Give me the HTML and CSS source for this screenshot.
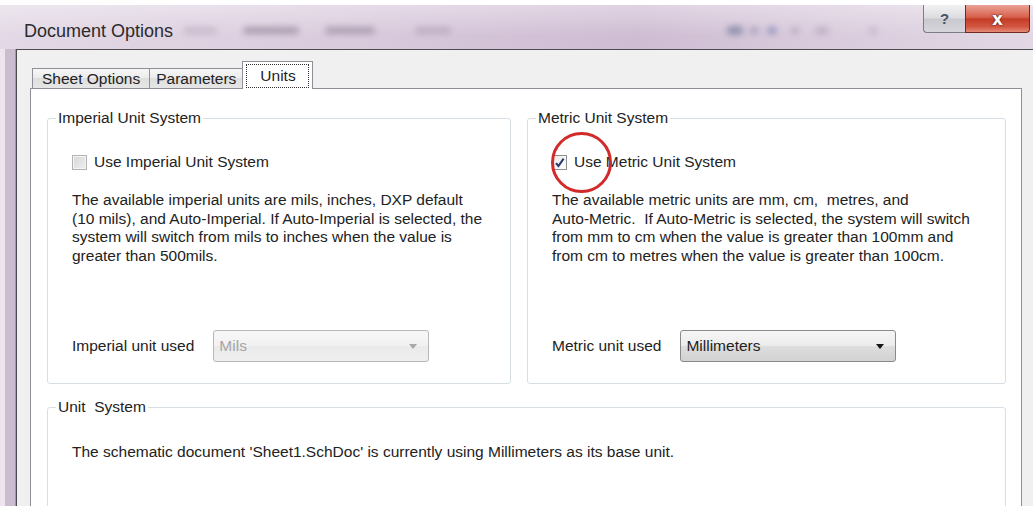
FILE: index.html
```html
<!DOCTYPE html>
<html lang="en">
<head>
<meta charset="utf-8">
<title>Document Options</title>
<link rel="stylesheet" href="styles.css">
</head>
<body>
<div class="window">
  <header class="titlebar">
    <span class="title">Document Options</span>
    <div class="ghost-menu">
      <span class="ghost m1"></span>
      <span class="ghost m2"></span>
      <span class="ghost m3"></span>
      <span class="ghost m4"></span>
    </div>
    <div class="ghost-tools">
      <span class="ghost t1"></span>
      <span class="ghost t2"></span>
      <span class="ghost t3"></span>
      <span class="ghost t4"></span>
      <span class="ghost t5"></span>
      <span class="ghost t6"></span>
    </div>
    <div class="caption-buttons">
      <span class="cap help">?</span>
      <span class="cap close">x</span>
    </div>
  </header>

  <div class="frame">
    <div class="frame-edge"></div>
    <div class="dialog">
      <div class="tabs">
        <div class="tab">Sheet Options</div>
        <div class="tab">Parameters</div>
        <div class="tab active"><span class="focus">Units</span></div>
      </div>

      <div class="panel">
        <div class="groups">
          <fieldset class="group">
            <legend>Imperial Unit System</legend>
            <div class="group-body">
              <label class="check"><span class="box off"></span>Use Imperial Unit System</label>
              <p class="desc">The available imperial units are mils, inches, DXP default<br>(10 mils), and Auto-Imperial. If Auto-Imperial is selected, the<br>system will switch from mils to inches when the value is<br>greater than 500mils.</p>
              <div class="unit-row">
                <span>Imperial unit used</span>
                <div class="combo disabled"><span>Mils</span><i class="arrow"></i></div>
              </div>
            </div>
          </fieldset>

          <fieldset class="group">
            <legend>Metric Unit System</legend>
            <div class="group-body">
              <label class="check"><span class="box on"><svg viewBox="0 0 13 13" width="13" height="13"><path d="M3 7.2 L5.4 10 L10.6 2.6" fill="none" stroke="#253a6e" stroke-width="2"/></svg></span>Use Metric Unit System<span class="ring"></span></label>
              <p class="desc">The available metric units are mm, cm,&nbsp; metres, and<br>Auto-Metric.&nbsp; If Auto-Metric is selected, the system will switch<br>from mm to cm when the value is greater than 100mm and<br>from cm to metres when the value is greater than 100cm.</p>
              <div class="unit-row">
                <span>Metric unit used</span>
                <div class="combo"><span>Millimeters</span><i class="arrow"></i></div>
              </div>
            </div>
          </fieldset>
        </div>

        <fieldset class="group wide">
          <legend>Unit&nbsp; System</legend>
          <div class="group-body status">
            <p class="desc">The schematic document 'Sheet1.SchDoc' is currently using Millimeters as its base unit.</p>
          </div>
        </fieldset>
      </div>
    </div>
  </div>
</div>
</body>
</html>
```

FILE: styles.css
```css
html, body {
  margin: 0;
  padding: 0;
}

body {
  width: 1033px;
  height: 506px;
  overflow: hidden;
  background: #ffffff;
  font-family: "Liberation Sans", Arial, sans-serif;
  color: #222222;
}

.window {
  display: flex;
  flex-direction: column;
  height: 506px;
  overflow: hidden;
}

/* ---------- caption / title bar ---------- */
.titlebar {
  margin-top: 5px;
  height: 44px;
  flex: none;
  display: flex;
  align-items: flex-start;
  padding: 0 3px 0 24px;
  background:
    linear-gradient(to bottom, rgba(255, 255, 255, 0.35), rgba(255, 255, 255, 0) 70%),
    linear-gradient(to right, #e3d9e6 0%, #dccfdf 25%, #d3c2d7 50%, #cfbdd3 62%, #d9cbdc 80%, #e2d8e5 100%);
}

.title {
  margin-top: 15px;
  font-size: 18px;
  line-height: 22px;
  color: #2b2b2b;
  white-space: nowrap;
}

.ghost-menu,
.ghost-tools {
  display: flex;
  align-items: center;
  margin-top: 20px;
  height: 10px;
}

.ghost-menu {
  margin-left: 10px;
}

.ghost-tools {
  margin-left: auto;
}

.ghost {
  display: block;
  height: 7px;
  border-radius: 4px;
  filter: blur(3px);
  background: #9d8fa3;
}

.m1 { width: 34px; opacity: 0.35; }
.m2 { width: 56px; margin-left: 26px; opacity: 0.8; }
.m3 { width: 50px; margin-left: 26px; opacity: 0.75; }
.m4 { width: 36px; margin-left: 40px; opacity: 0.45; }

.t1 { width: 16px; height: 9px; background: #7f86a3; opacity: 0.8; }
.t2 { width: 10px; margin-left: 6px; background: #8f8fb0; opacity: 0.6; }
.t3 { width: 10px; margin-left: 8px; background: #7b83b5; opacity: 0.7; }
.t4 { width: 8px; margin-left: 14px; background: #9b8fa8; opacity: 0.5; }
.t5 { width: 14px; margin-left: 16px; background: #9b8fa8; opacity: 0.45; }
.t6 { width: 8px; margin-left: 40px; background: #9b8fa8; opacity: 0.4; }

.caption-buttons {
  display: flex;
  margin-left: 46px;
}

.cap {
  height: 28px;
  box-sizing: border-box;
  display: flex;
  align-items: center;
  justify-content: center;
  font-weight: bold;
}

.help {
  width: 42px;
  border: 1px solid #7c7c84;
  border-top: none;
  border-right: none;
  border-radius: 0 0 0 4px;
  background: linear-gradient(#f2f2f3, #dcdce0 48%, #c8c8ce 52%, #d6d6dc);
  color: #4a5464;
  font-size: 15px;
}

.close {
  width: 65px;
  border: 1px solid #6f2a22;
  border-top: none;
  border-radius: 0 0 4px 0;
  background: linear-gradient(#eaa296, #d8604c 45%, #c43c27 52%, #d25540 80%, #e48b78);
  color: #ffffff;
  font-size: 17px;
  font-family: "DejaVu Sans", sans-serif;
  text-shadow: 0 0 2px #5a1a12, 0 0 1px #5a1a12;
}

/* ---------- window frame ---------- */
.frame {
  flex: 1;
  display: flex;
  min-height: 0;
  overflow: hidden;
}

.frame-edge {
  width: 16px;
  flex: none;
  background: linear-gradient(to right, #ece5ee 0 5px, #cbbdcf 5px 15px, #a398a6 15px 16px);
}

.dialog {
  flex: 1;
  min-width: 0;
  min-height: 0;
  display: flex;
  flex-direction: column;
  background: #f0f0f0;
  border-left: 1px solid #4b4b50;
  border-top: 1px solid #4b4b50;
  padding-top: 11px;
  overflow: hidden;
}

/* ---------- tabs ---------- */
.tabs {
  display: flex;
  align-items: flex-end;
  height: 28px;
  flex: none;
  margin: 0 0 -1px 15px;
  position: relative;
  z-index: 1;
}

.tab {
  height: 19px;
  margin-bottom: 1px;
  padding: 0 9px;
  border: 1px solid #8d9097;
  border-bottom: none;
  background: linear-gradient(#f6f6f6, #ebebeb 50%, #dedede 50%, #e6e6e6);
  font-size: 15.5px;
  line-height: 19px;
  white-space: nowrap;
}

.tab + .tab {
  margin-left: -1px;
}

.tab:nth-child(2) {
  padding: 0 6px;
}

.tab.active {
  margin-bottom: 0;
  padding: 2px 3px 0;
  height: 25px;
  background: #ffffff;
}

.focus {
  display: block;
  height: 22px;
  padding: 0 12px 0 13px;
  line-height: 22px;
  border: 1px dotted #333333;
}

/* ---------- tab page ---------- */
.panel {
  flex: 1;
  min-height: 0;
  overflow: hidden;
  margin: 0 11px 0 13px;
  background: #ffffff;
  border: 1px solid #8d9097;
  border-bottom: none;
  padding: 20px 15px 0 16px;
}

.groups {
  display: grid;
  grid-template-columns: 464px 1fr;
  gap: 16px;
}

.group {
  margin: 0;
  min-width: 0;
  padding: 0 14px 21px 8px;
  border: 1px solid #d7dfe4;
  border-radius: 3px;
}

.group legend {
  padding: 0 2px;
  font-size: 15.5px;
  line-height: 18px;
  white-space: nowrap;
}

.group-body {
  padding: 26px 0 0 16px;
}

.check {
  position: relative;
  display: flex;
  align-items: center;
  height: 18px;
  font-size: 15.5px;
  white-space: nowrap;
}

.box {
  width: 15px;
  height: 15px;
  box-sizing: border-box;
  margin-right: 7px;
  display: flex;
  align-items: center;
  justify-content: center;
}

.box.off {
  border: 1px solid #b2b2b2;
  background: linear-gradient(135deg, #d8d8d8, #eeeeee);
  box-shadow: inset 0 0 0 1px #f4f4f4;
}

.box.on {
  border: 1px solid #8e8f8f;
  background: linear-gradient(135deg, #e9e9e9, #ffffff);
}

/* red annotation ring drawn over the checkbox */
.ring {
  position: absolute;
  left: -1px;
  top: -21px;
  width: 61px;
  height: 61px;
  box-sizing: border-box;
  border: 3px solid #d22a2a;
  border-radius: 50%;
}

.desc {
  margin: 20px 0 0;
  font-size: 15.5px;
  line-height: 18.5px;
  white-space: nowrap;
}

.unit-row {
  display: flex;
  align-items: center;
  gap: 19px;
  margin-top: 65px;
  font-size: 15.5px;
  white-space: nowrap;
}

.combo {
  width: 216px;
  height: 32px;
  box-sizing: border-box;
  display: flex;
  align-items: center;
  justify-content: space-between;
  padding: 0 11px 0 5px;
  border: 1px solid #8a8a8a;
  border-radius: 3px;
  background: linear-gradient(#f6f6f6, #ececec 48%, #dddddd 52%, #d2d2d2);
  color: #1e1e1e;
}

.combo.disabled {
  border-color: #b8b8b8;
  background: linear-gradient(#f8f8f8, #f1f1f1 50%, #eaeaea 50%, #efefef);
  color: #a6a6a6;
}

.arrow {
  width: 0;
  height: 0;
  border-left: 4px solid transparent;
  border-right: 4px solid transparent;
  border-top: 5px solid #151515;
}

.combo.disabled .arrow {
  border-top-color: #a8a8a8;
}

.group.wide {
  margin-top: 14px;
  padding-bottom: 80px;
}

.status {
  padding-top: 27px;
}

.status .desc {
  margin: 0;
  line-height: 18px;
}
```
